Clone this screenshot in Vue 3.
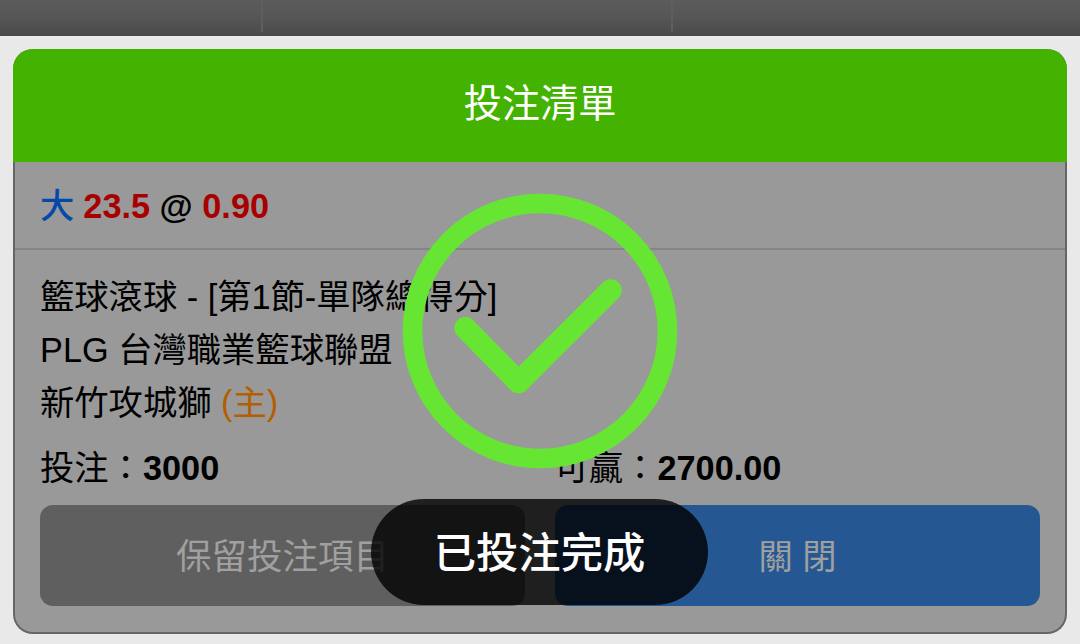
<template>
  <div class="page">
    <div class="backdrop">
      <div class="backdrop-cell first"></div>
      <div class="backdrop-cell second"></div>
      <div class="backdrop-cell last"></div>
    </div>

    <div class="sheet">
      <div class="card">
        <div class="card-header">{{ title }}</div>

        <div class="odds-row">
          <span class="pick">{{ bet.pick }}</span>
          <b><span class="red">{{ bet.line }}</span> <span class="at">@</span> <span class="red">{{ bet.odds }}</span></b>
        </div>

        <div class="card-body">
          <div class="line">{{ bet.market }}</div>
          <div class="line">{{ bet.league }}</div>
          <div class="line">{{ bet.team }} <span class="home">(主)</span></div>

          <div class="amounts">
            <div class="amount">投注：<b>{{ bet.stake }}</b></div>
            <div class="amount">可贏：<b>{{ bet.win }}</b></div>
          </div>

          <div class="actions">
            <button class="btn btn-keep">保留投注項目</button>
            <button class="btn btn-close">關 閉</button>
          </div>
        </div>
      </div>
    </div>

    <svg class="success-icon" viewBox="0 0 276 276" fill="none" stroke="#66e633">
      <circle cx="138" cy="138" r="127.5" stroke-width="19.6" />
      <path d="M63.3 135L116.6 189.3L208.8 97.3" stroke-width="22" stroke-linecap="round" stroke-linejoin="round" />
    </svg>
    <div class="toast">已投注完成</div>
  </div>
</template>

<script setup>
const title = '投注清單'
const bet = {
  pick: '大',
  line: '23.5',
  odds: '0.90',
  market: '籃球滾球 - [第1節-單隊總得分]',
  league: 'PLG 台灣職業籃球聯盟',
  team: '新竹攻城獅',
  stake: '3000',
  win: '2700.00'
}
</script>

<style>
body {
  margin: 0;
  overflow: hidden;
}
</style>

<style scoped>
.page {
  position: relative;
  width: 1080px;
  height: 644px;
  display: flex;
  flex-direction: column;
  overflow: hidden;
  background: #e9e9e9;
  color: #000;
  font-family: "Liberation Sans", "Noto Sans CJK TC", sans-serif;
  font-size: 34.3px;
}

.backdrop {
  height: 36px;
  flex-shrink: 0;
  display: flex;
  background: linear-gradient(#5b5b5b 0%, #565656 50%, #494949 100%);
}

.backdrop-cell {
  box-sizing: border-box;
  height: 32px;
  border-right: 2px solid #5e5e5e;
}

.first {
  width: 263px;
}

.second {
  width: 410px;
}

.last {
  flex: 1;
  border-right: none;
}

.sheet {
  flex: 1;
  box-sizing: border-box;
  padding: 13px 13px 10px;
}

.card {
  box-sizing: border-box;
  height: 585px;
  border: 2px solid #666;
  border-top: none;
  border-radius: 20px;
  background: #999;
}

.card-header {
  height: 113px;
  margin: 0 -2px;
  border-radius: 20px 20px 0 0;
  background: #44b200;
  color: #fff;
  font-size: 38.2px;
  line-height: 110px;
  text-align: center;
}

.odds-row {
  box-sizing: border-box;
  height: 88px;
  padding: 0 25px;
  border-bottom: 2px solid #858585;
  line-height: 88px;
  white-space: nowrap;
}

.pick {
  color: #0648a8;
  font-weight: 500;
  margin-right: 9px;
}

.at {
  font-size: 34px;
}

.red {
  color: #a80000;
}

.card-body {
  padding: 21px 25px 0;
}

.line {
  height: 53px;
  line-height: 53px;
  white-space: nowrap;
}

.home {
  color: #b35f00;
}

.amounts {
  display: flex;
  margin-top: 12px;
  height: 53px;
  line-height: 53px;
}

.amount {
  width: 514.5px;
  flex-shrink: 0;
}

.actions {
  display: flex;
  gap: 30px;
  margin-top: 10px;
}

.btn {
  flex: 1;
  height: 101px;
  padding: 0 0 4px;
  border: none;
  border-radius: 13px;
  font-family: inherit;
  font-size: 35.5px;
  color: #a0a0a0;
}

.btn-keep {
  background: #5f5f5f;
}

.btn-close {
  background: #255892;
  font-size: 34.3px;
}

.success-icon {
  position: absolute;
  left: 402px;
  top: 193px;
  width: 276px;
  height: 276px;
}

.toast {
  position: absolute;
  left: 371px;
  top: 499px;
  width: 337px;
  height: 106px;
  border-radius: 53px;
  background: rgba(0, 0, 0, 0.8);
  color: #fff;
  font-size: 42.3px;
  font-weight: 500;
  line-height: 109px;
  text-align: center;
}
</style>
